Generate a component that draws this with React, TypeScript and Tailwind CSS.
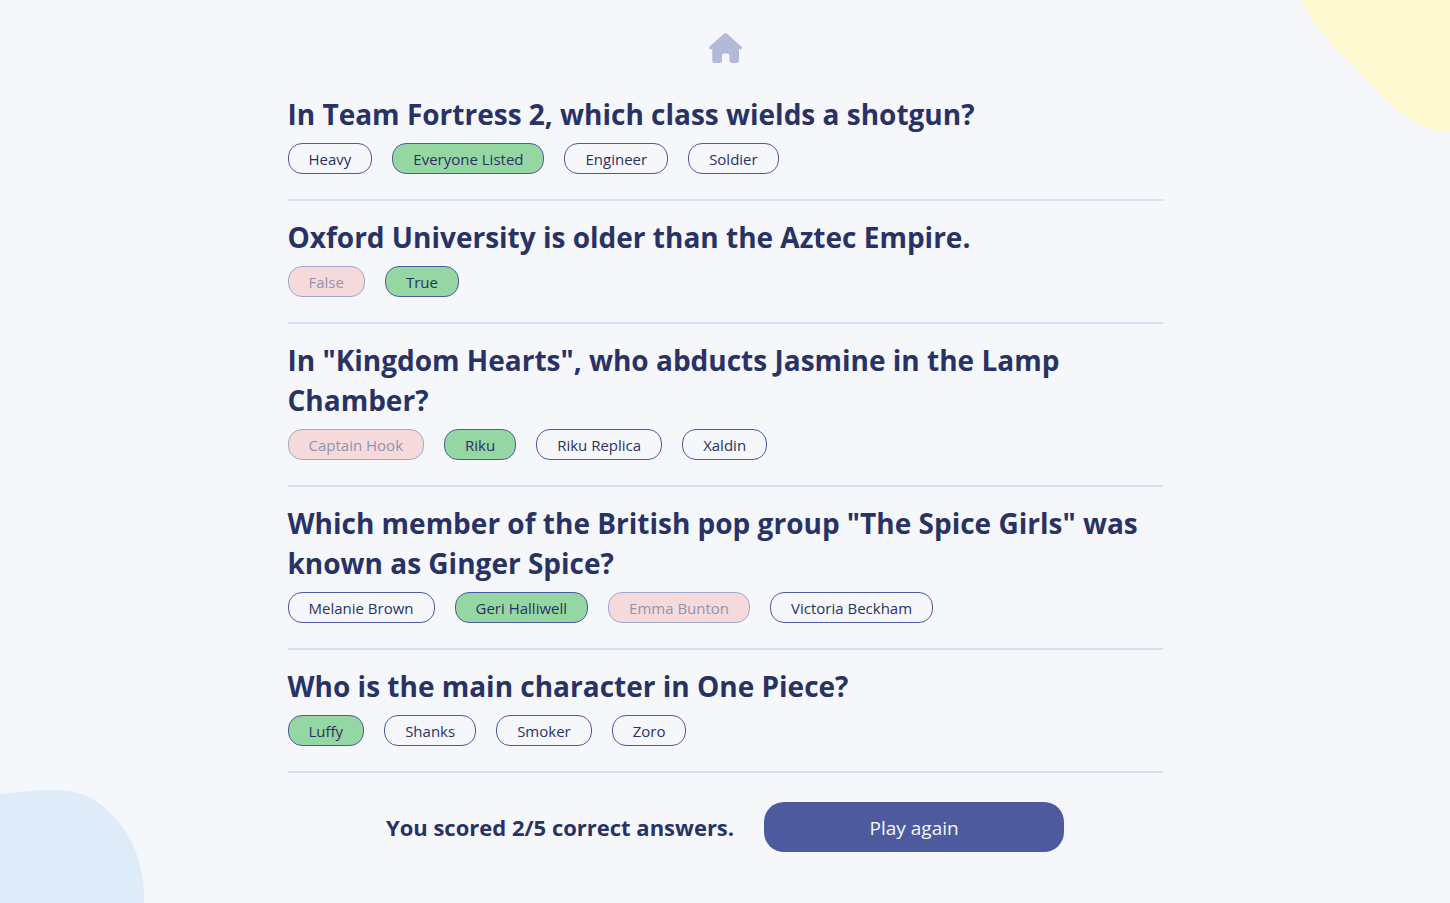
type Status = "idle" | "correct" | "wrong";
type Question = { text: string; answers: [string, Status][] };

const questions: Question[] = [
  {
    text: "In Team Fortress 2, which class wields a shotgun?",
    answers: [["Heavy", "idle"], ["Everyone Listed", "correct"], ["Engineer", "idle"], ["Soldier", "idle"]],
  },
  {
    text: "Oxford University is older than the Aztec Empire.",
    answers: [["False", "wrong"], ["True", "correct"]],
  },
  {
    text: 'In "Kingdom Hearts", who abducts Jasmine in the Lamp Chamber?',
    answers: [["Captain Hook", "wrong"], ["Riku", "correct"], ["Riku Replica", "idle"], ["Xaldin", "idle"]],
  },
  {
    text: 'Which member of the British pop group "The Spice Girls" was known as Ginger Spice?',
    answers: [["Melanie Brown", "idle"], ["Geri Halliwell", "correct"], ["Emma Bunton", "wrong"], ["Victoria Beckham", "idle"]],
  },
  {
    text: "Who is the main character in One Piece?",
    answers: [["Luffy", "correct"], ["Shanks", "idle"], ["Smoker", "idle"], ["Zoro", "idle"]],
  },
];

const pillStyles: Record<Status, string> = {
  idle: "border-[#4d5b9e]",
  correct: "border-[#4d5b9e] bg-[#94d7a2]",
  wrong: "border-[#4d5b9e] bg-[#f8bcbc] opacity-50",
};

function HomeLink() {
  return (
    <a href="#" aria-label="Home" className="text-[#b2b9d9]">
      <svg width="33" height="30" viewBox="0 0 33 30" fill="currentColor" aria-hidden="true">
        <path d="M15 .7a2.300 2.300 0 0 1 3 0L32.400 13.400c1.100 1 .5 2.900-1 2.900H30v11.200a2.500 2.500 0 0 1-2.500 2.500h-4.600a2.500 2.500 0 0 1-2.500-2.500v-5a2 2 0 0 0-2-2h-3.400a2 2 0 0 0-2 2v5a2.500 2.500 0 0 1-2.500 2.500h-4.700a2.500 2.500 0 0 1-2.500-2.500v-11.200H1.600c-1.500 0-2.100-1.900-1-2.900z" />
      </svg>
    </a>
  );
}

function QuestionBlock({ question }: { question: Question }) {
  return (
    <section className="border-b-2 border-[#dbdef0] pt-4 pb-[25px]">
      <h2 className="text-[28px] leading-10 font-bold">{question.text}</h2>
      <div className="mt-[9px] flex flex-wrap gap-5">
        {question.answers.map(([label, status]) => (
          <button
            key={label}
            type="button"
            className={`h-[31px] rounded-[14px] border px-5 pt-px text-[15px] ${pillStyles[status]}`}
          >
            {label}
          </button>
        ))}
      </div>
    </section>
  );
}

export default function App() {
  return (
    <div className="relative min-h-screen overflow-hidden bg-[#f5f7fb] font-['Open_Sans','Noto_Sans',sans-serif] text-[#293264]">
      <svg className="absolute top-0 right-0" width="150" height="132" viewBox="0 0 150 132" aria-hidden="true">
        <path d="M1.500 0C9 20 24 37 47 59C68 79 80 97 101 113C116 125 132 132 150 132V0Z" fill="#fffad1" />
      </svg>
      <svg className="absolute bottom-0 left-0" width="145" height="114" viewBox="0 0 145 114" aria-hidden="true">
        <path d="M0 5C20 3 36 1 54 1C78 1 98 9 117 31C133 50 144 76 144 108V114H0Z" fill="#deebf8" />
      </svg>
      <main className="relative mx-auto w-full max-w-[875px] pt-[33px] pb-12">
        <div className="mb-[15px] flex h-[30px] justify-center">
          <HomeLink />
        </div>
        {questions.map((question) => (
          <QuestionBlock key={question.text} question={question} />
        ))}
        <div className="mt-[29px] flex items-center justify-center gap-[30px]">
          <p className="text-[22px] leading-8 font-bold">You scored 2/5 correct answers.</p>
          <button type="button" className="h-[50px] w-[300px] rounded-[20px] bg-[#4d5b9e] pt-0.5 text-[19px] text-[#f5f7fb]">
            Play again
          </button>
        </div>
      </main>
    </div>
  );
}
